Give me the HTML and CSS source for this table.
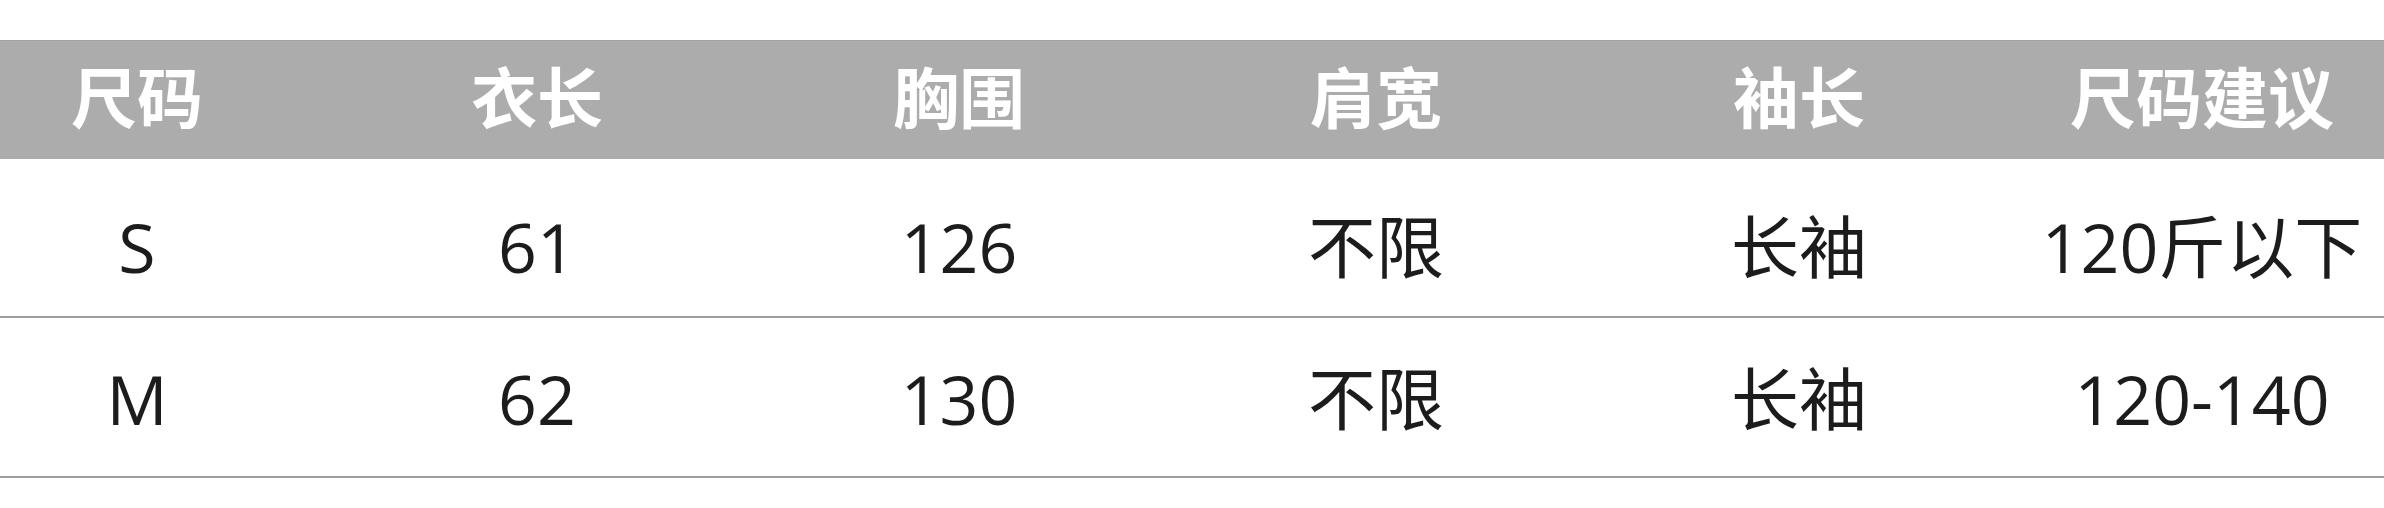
FILE: index.html
```html
<!DOCTYPE html>
<html lang="zh-CN">
<head>
<meta charset="utf-8">
<title>尺码表</title>
<link rel="stylesheet" href="styles.css">
</head>
<body>
<div class="sheet">
  <div class="size-table">
    <div class="row head">
      <div class="cell">尺码</div>
      <div class="cell">衣长</div>
      <div class="cell">胸围</div>
      <div class="cell">肩宽</div>
      <div class="cell">袖长</div>
      <div class="cell">尺码建议</div>
    </div>
    <div class="row body first">
      <div class="cell">S</div>
      <div class="cell">61</div>
      <div class="cell">126</div>
      <div class="cell">不限</div>
      <div class="cell">长袖</div>
      <div class="cell">120斤以下</div>
    </div>
    <div class="row body second">
      <div class="cell">M</div>
      <div class="cell">62</div>
      <div class="cell">130</div>
      <div class="cell">不限</div>
      <div class="cell">长袖</div>
      <div class="cell">120-140</div>
    </div>
  </div>
</div>
</body>
</html>
```

FILE: styles.css
```css
html, body {
  margin: 0;
  padding: 0;
  background: #ffffff;
}

body {
  width: 2384px;
  height: 508px;
  overflow: hidden;
}

.sheet {
  width: 2384px;
  overflow: hidden;
  padding-top: 40px;
}

.size-table {
  width: 2440px;
}

.row {
  display: grid;
  grid-template-columns: 274px 526px 318px 516px 330px 476px;
  align-items: center;
}

.cell {
  text-align: center;
  white-space: nowrap;
}

.head {
  height: 119px;
  box-sizing: border-box;
  background: #acacac;
  border-top: 1px solid #a2a2a2;
  padding-bottom: 12px;
  color: #ffffff;
  font-family: "Noto Sans CJK SC", sans-serif;
  font-weight: 700;
  font-size: 66px;
  line-height: 66px;
}

.body {
  box-sizing: border-box;
  border-bottom: 2px solid #9e9ea2;
  color: #1c1c1c;
  font-family: "Open Sans", "Noto Sans CJK SC", sans-serif;
  font-weight: 400;
  font-size: 68px;
  line-height: 68px;
}

.body.first {
  height: 159px;
  padding-top: 18px;
}

.body.second {
  height: 160px;
  padding-top: 4px;
}
```
